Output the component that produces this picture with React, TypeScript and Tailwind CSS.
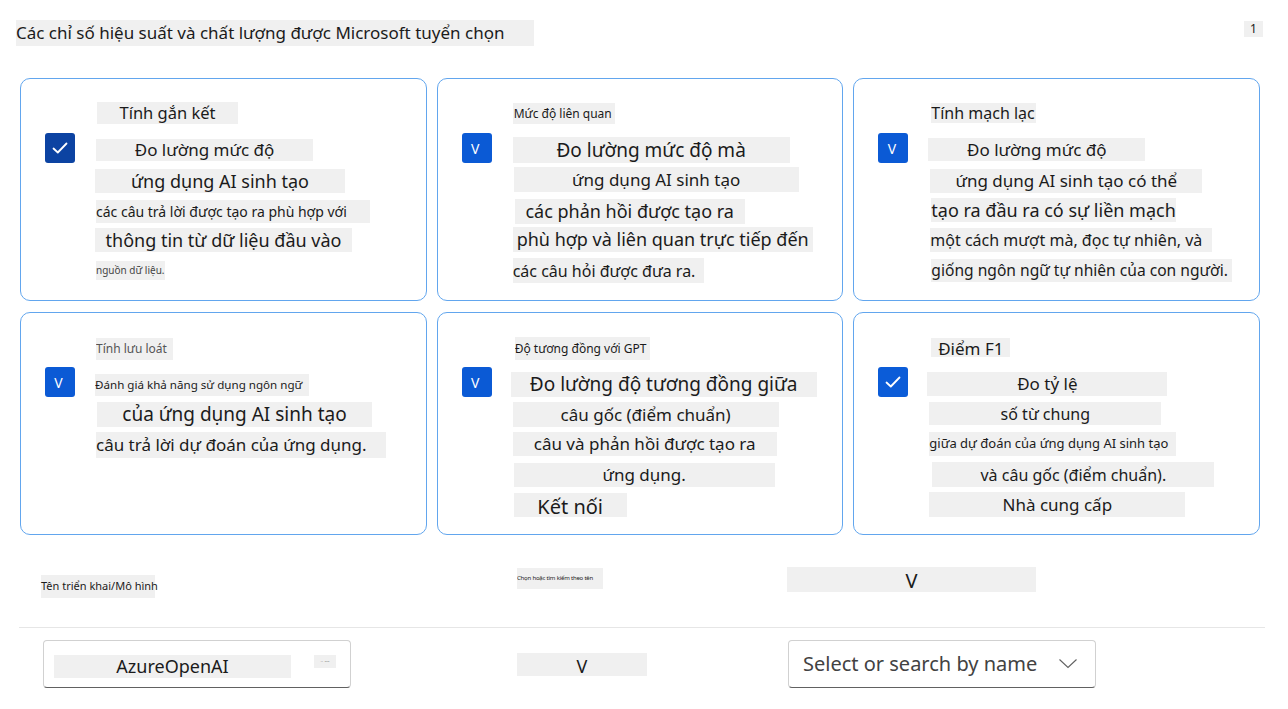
import React from 'react';

type Line = [string, string];

interface MetricCard {
  box: 'dark' | 'check' | 'v';
  lines: Line[];
}

const cards: MetricCard[] = [
  {
    box: 'dark',
    lines: [
      ['ml-[2px] w-[141px] h-[22px] text-[16.5px] justify-center', 'Tính gắn kết'],
      ['ml-[1px] mt-[15px] w-[217px] h-[22px] text-[17px] justify-center', 'Đo lường mức độ'],
      ['mt-[8px] w-[250px] h-[24px] text-[18px] justify-center', 'ứng dụng AI sinh tạo'],
      ['ml-[1px] mt-[7px] w-[274px] h-[23px] text-[14px]', 'các câu trả lời được tạo ra phù hợp với'],
      ['mt-[5px] w-[257px] h-[24px] text-[18px] justify-center', 'thông tin từ dữ liệu đầu vào'],
      ['ml-[1px] mt-[9px] w-[69px] h-[19px] text-[10px] text-[#444]', 'nguồn dữ liệu.'],
    ],
  },
  {
    box: 'v',
    lines: [
      ['ml-[1px] mt-[1px] w-[102px] h-[21px] text-[12px] pl-[1px]', 'Mức độ liên quan'],
      ['ml-[1px] mt-[13px] w-[277px] h-[26px] text-[19px] justify-center', 'Đo lường mức độ mà'],
      ['ml-[2px] mt-[4px] w-[285px] h-[25px] text-[17px] justify-center', 'ứng dụng AI sinh tạo'],
      ['ml-[3px] mt-[7px] w-[230px] h-[25px] text-[18px] justify-center', 'các phản hồi được tạo ra'],
      ['ml-[1px] mt-[3px] w-[300px] h-[25px] text-[18px] justify-center', 'phù hợp và liên quan trực tiếp đến'],
      ['ml-[1px] mt-[6px] w-[191px] h-[25px] text-[16px]', 'các câu hỏi được đưa ra.'],
    ],
  },
  {
    box: 'v',
    lines: [
      ['ml-[3px] mt-[1px] w-[105px] h-[20px] text-[16px]', 'Tính mạch lạc'],
      ['mt-[15px] w-[217px] h-[23px] text-[17px] justify-center', 'Đo lường mức độ'],
      ['ml-[2px] mt-[8px] w-[272px] h-[24px] text-[17px] justify-center', 'ứng dụng AI sinh tạo có thể'],
      ['ml-[3px] mt-[5px] w-[245px] h-[24px] text-[18px]', 'tạo ra đầu ra có sự liền mạch'],
      ['ml-[2px] mt-[6px] w-[282px] h-[24px] text-[16px]', 'một cách mượt mà, đọc tự nhiên, và'],
      ['ml-[3px] mt-[7px] w-[301px] h-[23px] text-[15.6px]', 'giống ngôn ngữ tự nhiên của con người.'],
    ],
  },
  {
    box: 'v',
    lines: [
      ['ml-[1px] mt-[2px] w-[77px] h-[22px] text-[12px] text-[#555]', 'Tính lưu loát'],
      ['mt-[14px] w-[214px] h-[22px] text-[11.6px]', 'Đánh giá khả năng sử dụng ngôn ngữ'],
      ['ml-[2px] mt-[6px] w-[275px] h-[25px] text-[19px] justify-center', 'của ứng dụng AI sinh tạo'],
      ['ml-[1px] mt-[5px] w-[290px] h-[26px] text-[17px]', 'câu trả lời dự đoán của ứng dụng.'],
    ],
  },
  {
    box: 'v',
    lines: [
      ['ml-[3px] mt-[1px] w-[135px] h-[23px] text-[12px]', 'Độ tương đồng với GPT'],
      ['-ml-px mt-[12px] w-[306px] h-[25px] text-[19px] justify-center', 'Đo lường độ tương đồng giữa'],
      ['ml-[1px] mt-[5px] w-[266px] h-[25px] text-[17px] justify-center', 'câu gốc (điểm chuẩn)'],
      ['ml-[1px] mt-[5px] w-[264px] h-[24px] text-[17px] justify-center', 'câu và phản hồi được tạo ra'],
      ['ml-[2px] mt-[7px] w-[261px] h-[24px] text-[17px] justify-center', 'ứng dụng.'],
      ['ml-[2px] mt-[6px] w-[113px] h-[24px] text-[20px] justify-center pt-[4px]', 'Kết nối'],
    ],
  },
  {
    box: 'check',
    lines: [
      ['ml-[3px] mt-[2px] w-[79px] h-[19px] text-[17px] justify-center pt-[3px]', 'Điểm F1'],
      ['-ml-px mt-[15px] w-[240px] h-[24px] text-[17px] justify-center', 'Đo tỷ lệ'],
      ['ml-[1px] mt-[6px] w-[232px] h-[23px] text-[16px] justify-center', 'số từ chung'],
      ['ml-[1px] mt-[7px] w-[247px] h-[24px] text-[13px]', 'giữa dự đoán của ứng dụng AI sinh tạo'],
      ['ml-[4px] mt-[6px] w-[282px] h-[25px] text-[16px] justify-center', 'và câu gốc (điểm chuẩn).'],
      ['ml-[1px] mt-[5px] w-[256px] h-[25px] text-[17px] justify-center', 'Nhà cung cấp'],
    ],
  },
];

function CheckMark() {
  return (
    <svg width="30" height="30" viewBox="0 0 30 30" fill="none">
      <path d="M8.5 15.5 L12.8 19.5 L21.5 10.5" stroke="white" strokeWidth="1.8" strokeLinecap="round" strokeLinejoin="round" />
    </svg>
  );
}

function Box({ kind }: { kind: MetricCard['box'] }) {
  if (kind === 'v') {
    return (
      <div className="w-[30px] h-[30px] rounded-[3px] bg-[#0b5ad5] flex items-center justify-center text-white text-[14px] pr-[3px]">
        V
      </div>
    );
  }
  return (
    <div className={`w-[30px] h-[30px] rounded-[3px] ${kind === 'dark' ? 'bg-[#0c43a2]' : 'bg-[#0b5cd8]'}`}>
      <CheckMark />
    </div>
  );
}

function Card({ card }: { card: MetricCard }) {
  return (
    <div className="h-[223px] rounded-[10px] border border-[#62a6ee] flex pt-[23px] pl-[24px] bg-white">
      <div className="mt-[31px] shrink-0">
        <Box kind={card.box} />
      </div>
      <div className="ml-[20px] flex flex-col items-start">
        {card.lines.map(([cls, text]) => (
          <div
            key={text}
            className={`${cls} flex items-center bg-[#f0f0f0] whitespace-nowrap overflow-hidden shrink-0`}
          >
            {text}
          </div>
        ))}
      </div>
    </div>
  );
}

export default function App() {
  return (
    <div className="w-[1288px] h-[709px] bg-white text-[#1b1b1b] overflow-hidden font-['Noto_Sans',sans-serif]">
      <div className="flex justify-between items-start pl-[16px] pr-[25px] pt-[20px]">
        <div className="w-[518px] h-[26px] bg-[#f0f0f0] text-[17px] flex items-center whitespace-nowrap">
          Các chỉ số hiệu suất và chất lượng được Microsoft tuyển chọn
        </div>
        <div className="mt-[1px] w-[19px] h-[16px] bg-[#f0f0f0] text-[12px] flex items-center justify-center">
          1
        </div>
      </div>

      <div className="ml-[20px] mt-[32px] w-[1240px] grid grid-cols-3 gap-x-[10px] gap-y-[11px]">
        {cards.map((c, i) => (
          <Card key={i} card={c} />
        ))}
      </div>

      <div className="flex items-start mt-[32px] h-[31px]">
        <div className="ml-[41px] mt-[8px] w-[114px] h-[23px] bg-[#f0f0f0] text-[11px] flex items-center whitespace-nowrap">
          Tên triển khai/Mô hình
        </div>
        <div className="ml-[362px] mt-[1px] w-[86px] h-[21px] bg-[#f0f0f0] text-[6px] tracking-[-0.2px] flex items-center whitespace-nowrap overflow-hidden">
          Chọn hoặc tìm kiếm theo tên
        </div>
        <div className="ml-[184px] w-[249px] h-[25px] bg-[#f0f0f0] text-[20px] flex items-center justify-center pt-[3px]">
          V
        </div>
      </div>

      <div className="ml-[19px] mt-[29px] w-[1246px] h-px bg-[#e6e6e6]" />

      <div className="flex items-start mt-[12px]">
        <div className="ml-[43px] w-[308px] h-[48px] rounded-[4px] border border-[#d1d1d1] border-b-[#616161] flex items-start pt-[14px] pl-[10px]">
          <div className="w-[237px] h-[23px] bg-[#f0f0f0] text-[18px] flex items-center justify-center">
            AzureOpenAI
          </div>
          <div className="ml-[23px] w-[22px] h-[13px] bg-[#f0f0f0] text-[5px] text-[#777] flex items-center justify-center">
            ·· ––
          </div>
        </div>
        <div className="ml-[166px] mt-[13px] w-[130px] h-[23px] bg-[#f0f0f0] text-[18px] flex items-center justify-center pt-[3px]">
          V
        </div>
        <div className="ml-[141px] w-[308px] h-[48px] rounded-[4px] border border-[#d1d1d1] border-b-[#616161] flex items-center pl-[14px] pr-[17px] justify-between">
          <span className="text-[20px] text-[#424242]">Select or search by name</span>
          <svg width="20" height="12" viewBox="0 0 20 12" fill="none">
            <path d="M1.5 1.5 L10 9.5 L18.5 1.5" stroke="#616161" strokeWidth="1.1" />
          </svg>
        </div>
      </div>
    </div>
  );
}
